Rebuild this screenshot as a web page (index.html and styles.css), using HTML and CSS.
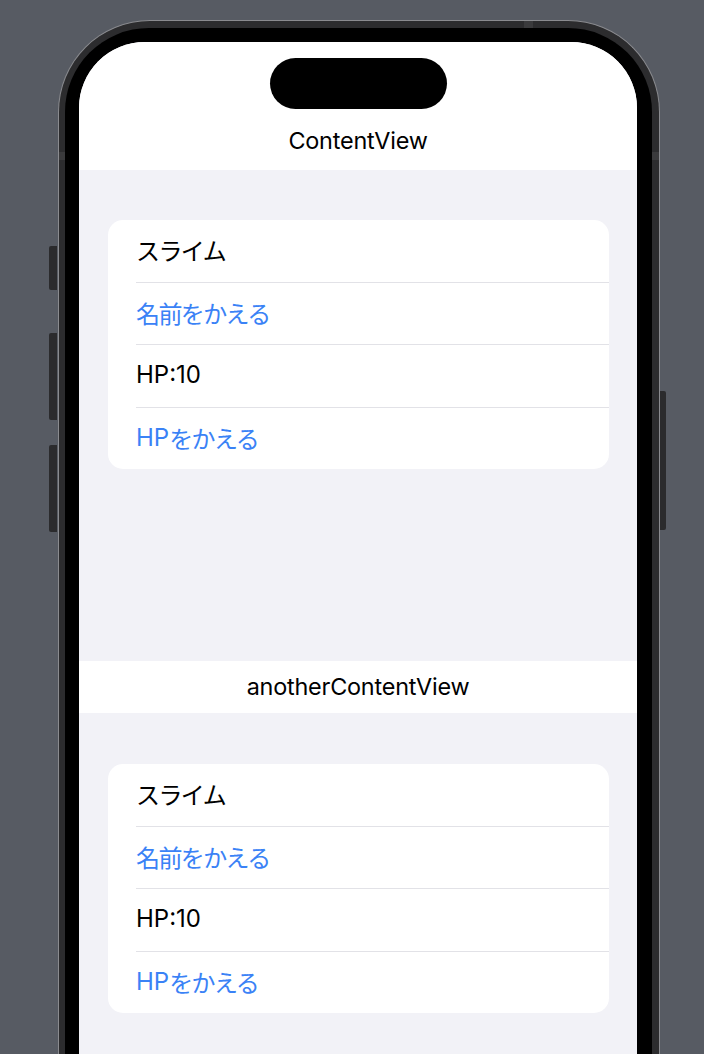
FILE: index.html
```html
<!DOCTYPE html>
<html lang="ja">
<head>
    <meta charset="UTF-8">
    <meta name="viewport" content="width=device-width, initial-scale=1.0">
    <title>ContentView</title>
    <link rel="stylesheet" href="styles.css">
</head>
<body>

<div class="device">
    <!-- left side buttons -->
    <div class="rail rail-left">
        <div class="side-btn action-btn"></div>
        <div class="side-btn volume-btn"></div>
        <div class="side-btn volume-btn"></div>
    </div>

    <div class="phone">
        <!-- antenna bands on the frame -->
        <div class="antenna antenna-top"></div>
        <div class="antenna antenna-left"></div>
        <div class="antenna antenna-right"></div>

        <div class="bezel">
            <div class="screen">

                <!-- ContentView -->
                <div class="nav-top">
                    <div class="island"></div>
                    <div class="nav-title">ContentView</div>
                </div>
                <div class="list-area first">
                    <div class="card">
                        <div class="row"><div class="label"><span class="ja">スライム</span></div></div>
                        <div class="row"><div class="label link"><span class="ja">名前をかえる</span></div></div>
                        <div class="row"><div class="label">HP:10</div></div>
                        <div class="row"><div class="label link">HP<span class="ja">をかえる</span></div></div>
                    </div>
                </div>

                <!-- anotherContentView -->
                <div class="nav-bar">
                    <div class="nav-title">anotherContentView</div>
                </div>
                <div class="list-area second">
                    <div class="card">
                        <div class="row"><div class="label"><span class="ja">スライム</span></div></div>
                        <div class="row"><div class="label link"><span class="ja">名前をかえる</span></div></div>
                        <div class="row"><div class="label">HP:10</div></div>
                        <div class="row"><div class="label link">HP<span class="ja">をかえる</span></div></div>
                    </div>
                </div>

            </div>
        </div>
    </div>

    <!-- right side button -->
    <div class="rail rail-right">
        <div class="side-btn power-btn"></div>
    </div>
</div>

</body>
</html>
```

FILE: styles.css
```css
body {
    margin: 0;
    padding: 20px 0 0 49px;
    background-color: #575b63;
    font-family: 'Inter', 'Noto Sans CJK JP', sans-serif;
    overflow: hidden;
    height: 1034px;
}
.device {
    display: flex;
    align-items: flex-start;
}
.rail {
    display: flex;
    flex-direction: column;
}
.rail-left {
    width: 9px;
    padding-top: 226px;
}
.rail-right {
    width: 6px;
    padding-top: 371px;
}
.side-btn {
    background-color: #2b2b2d;
}
.rail-left .side-btn {
    width: 8px;
    border-radius: 2px 0 0 2px;
}
.action-btn {
    height: 44px;
    margin-bottom: 43px;
}
.volume-btn {
    height: 87px;
    margin-bottom: 25px;
}
.power-btn {
    width: 6px;
    height: 139px;
    border-radius: 0 2px 2px 0;
}
.phone {
    position: relative;
    width: 587px;
    padding: 7px 7px 0 6px;
    background-color: #2c2c2e;
    border: 1px solid #8a8b8f;
    border-bottom: none;
    border-radius: 92px 92px 0 0;
}
.antenna {
    position: absolute;
    background-color: #3a3a3c;
}
.antenna-top {
    top: 0;
    left: 465px;
    width: 9px;
    height: 7px;
}
.antenna-left {
    top: 131px;
    left: 0;
    width: 6px;
    height: 8px;
}
.antenna-right {
    top: 131px;
    right: 0;
    width: 7px;
    height: 8px;
}
.bezel {
    position: relative;
    background-color: #000;
    padding: 14px 14px 0 14px;
    border-radius: 84px 84px 0 0;
}
.screen {
    width: 558px;
    height: 1012px;
    background-color: #f2f2f7;
    border-radius: 66px 66px 0 0;
    overflow: hidden;
}
.nav-top {
    height: 128px;
    background-color: #fff;
    display: flex;
    flex-direction: column;
    align-items: center;
}
.island {
    width: 177px;
    height: 51px;
    margin-top: 16px;
    background-color: #000;
    border-radius: 26px;
}
.nav-title {
    font-size: 23.4px;
    line-height: 30px;
    color: #000;
    letter-spacing: -0.2px;
}
.nav-top .nav-title {
    margin-top: 17px;
}
.nav-bar {
    height: 52px;
    background-color: #fff;
    display: flex;
    justify-content: center;
    align-items: center;
}
.list-area {
    padding: 0 28px 0 29px;
}
.list-area.first {
    padding-top: 50px;
    padding-bottom: 192px;
}
.list-area.second {
    padding-top: 51px;
}
.card {
    background-color: #fff;
    border-radius: 15px;
    overflow: hidden;
}
.row {
    padding-left: 28px;
}
.label {
    box-sizing: border-box;
    height: 63px;
    padding-bottom: 3px;
    display: flex;
    align-items: center;
    border-bottom: 1px solid #e2e2e7;
    font-size: 24px;
    color: #000;
}
.row:nth-child(2) .label {
    height: 62px;
}
.row:last-child .label {
    height: 61px;
    border-bottom: none;
}
.link {
    color: #3a82f6;
}
.ja {
    letter-spacing: -1.6px;
}
```
